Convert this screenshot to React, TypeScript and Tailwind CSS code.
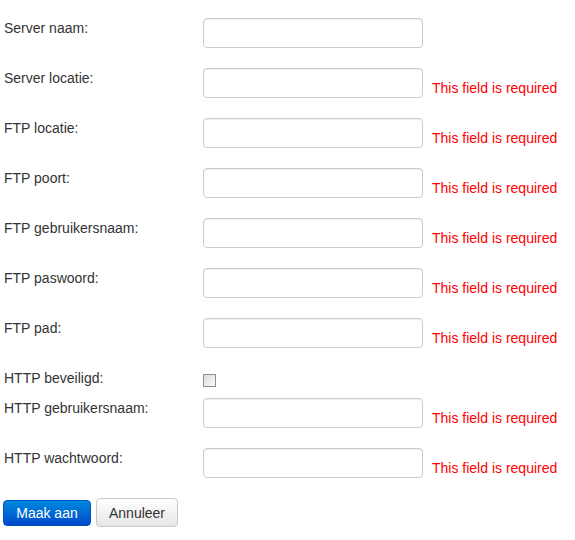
export default function App() {
  const rows: { label: string; error: boolean }[] = [
    { label: "Server naam:", error: false },
    { label: "Server locatie:", error: true },
    { label: "FTP locatie:", error: true },
    { label: "FTP poort:", error: true },
    { label: "FTP gebruikersnaam:", error: true },
    { label: "FTP paswoord:", error: true },
    { label: "FTP pad:", error: true },
  ];

  const Row = ({ label, error }: { label: string; error: boolean }) => (
    <div className="flex mb-[20px]">
      <label className="w-[199px] shrink-0 leading-[20px]">{label}</label>
      <input
        type="text"
        className="w-[220px] h-[30px] shrink-0 rounded-[4px] border border-[#cccccc] bg-white shadow-[inset_0_1px_1px_rgba(0,0,0,0.075)] outline-none px-[6px]"
      />
      {error && (
        <span className="self-end ml-[9px] leading-[20px] text-[#ff0000]">This field is required</span>
      )}
    </div>
  );

  return (
    <div className="min-h-[540px] bg-white pt-[18px] pl-[4px] text-[14px] text-[#333333] font-['Liberation_Sans',Arial,sans-serif]">
      {rows.map((r) => (
        <Row key={r.label} label={r.label} error={r.error} />
      ))}

      {/* checkbox */}
      <div className="flex h-[30px]">
        <label className="w-[199px] shrink-0 leading-[20px]">HTTP beveiligd:</label>
        <span className="mt-[6px] w-[13px] h-[13px] border border-[#8f8f8f] bg-gradient-to-br from-[#dcdcdc] to-[#fbfbfb]" />
      </div>

      <Row label="HTTP gebruikersnaam:" error={true} />
      <Row label="HTTP wachtwoord:" error={true} />

      <div className="flex items-center gap-[5px] -ml-[1px] mt-[1px]">
        <button className="h-[26px] w-[88px] rounded-[4px] border border-[#0050c0] bg-gradient-to-b from-[#0088dd] to-[#0048cc] text-white leading-[20px]">
          Maak aan
        </button>
        <button className="h-[29px] w-[82px] rounded-[4px] border border-[#c8c8c8] bg-gradient-to-b from-white to-[#e6e6e6] text-[#333333] leading-[20px]">
          Annuleer
        </button>
      </div>
    </div>
  );
}
